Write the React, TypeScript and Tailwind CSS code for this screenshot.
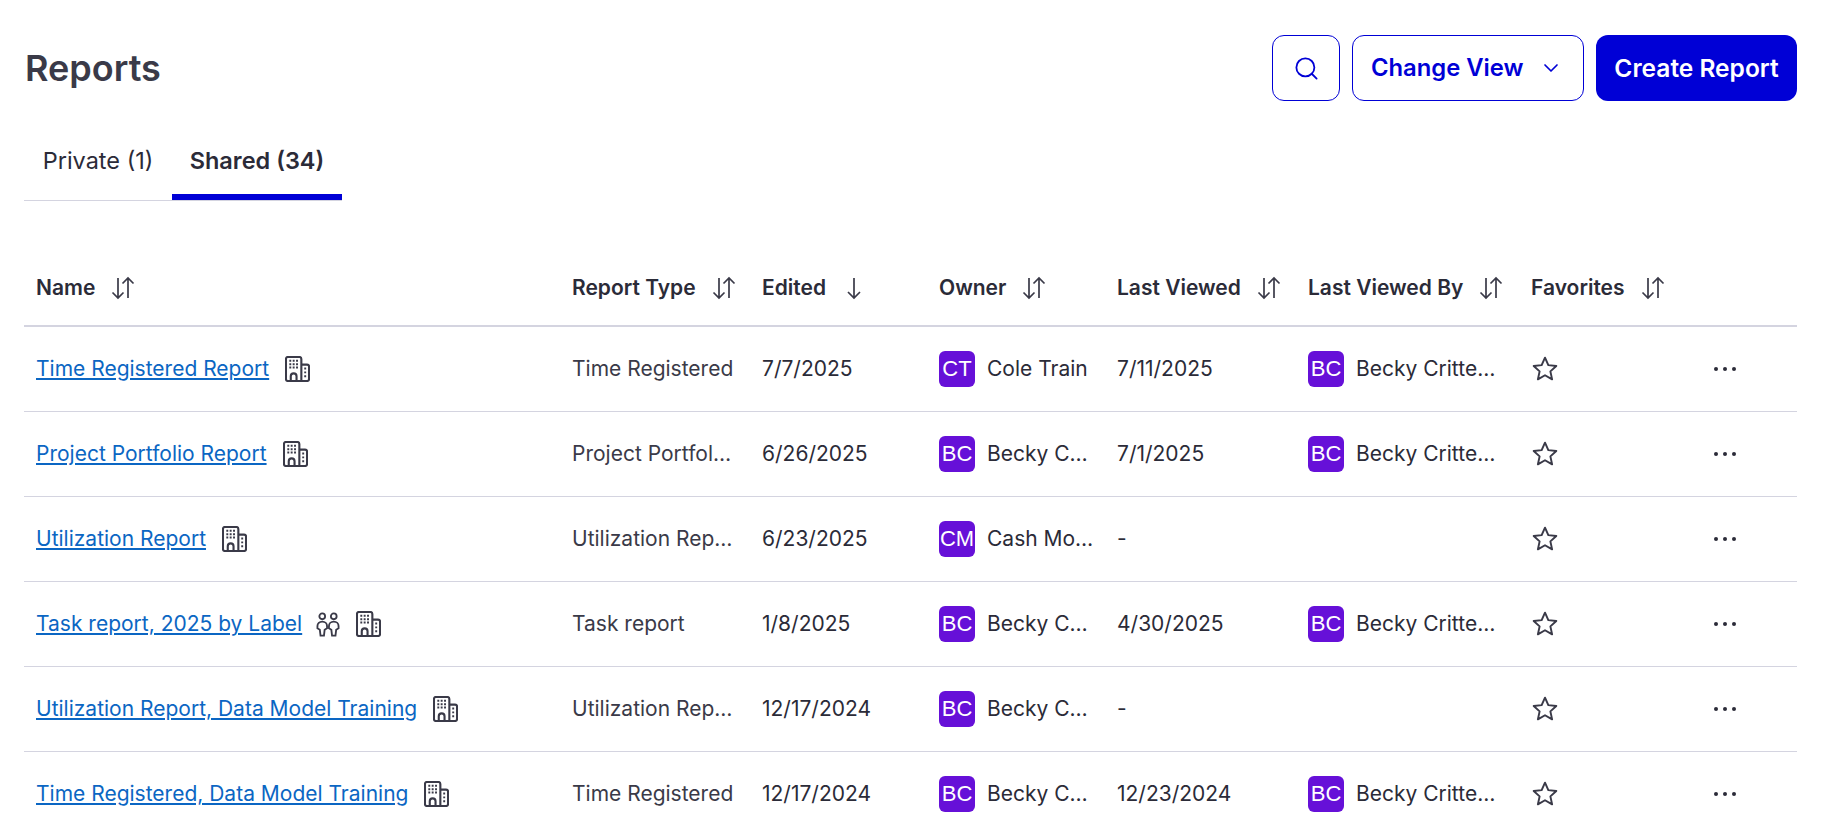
import { ChevronDown, Search } from "lucide-react";

const BLUE = "text-[#0000d6]";
const GRID = "grid grid-cols-[536px_190px_177px_178px_191px_223px_181px_1fr] items-center";

const SortIcon = ({ dir = "both" }: { dir?: "both" | "down" }) => (
  <svg width="26" height="26" viewBox="0 0 26 26" fill="none" stroke="#3a3a48" strokeWidth="1.7" className="ml-[15px]">
    {dir === "both" ? (
      <>
        <path d="M8 3v20M2.500 17.500 8 23l5.500-5.500" />
        <path d="M18 23V3M12.500 8.500 18 3l5.500 5.500" />
      </>
    ) : (
      <path d="M13 3v20M7 17l6 6 6-6" />
    )}
  </svg>
);

const BuildingIcon = () => (
  <svg width="25" height="26" viewBox="0 0 26 27" fill="none" stroke="#3a3a48" strokeWidth="2.200" className="ml-4 shrink-0">
    <path d="M17 26H3a2 2 0 0 1-2-2V3a2 2 0 0 1 2-2h12a2 2 0 0 1 2 2v23Zm0-17h6a2 2 0 0 1 2 2v13a2 2 0 0 1-2 2h-6" />
    <path d="M6 26v-5a3 3 0 0 1 6 0v5" />
    <path
      d="M4.500 5h2M8 5h2M11.500 5h2M4.500 8.500h2M8 8.500h2M11.500 8.500h2M4.500 12h2M8 12h2M11.500 12h2M20 13h2M20 17h2M20 21h2"
      strokeWidth="2"
    />
  </svg>
);

const PeopleIcon = () => (
  <svg width="24" height="25" viewBox="0 0 25 26" fill="none" stroke="#3a3a48" strokeWidth="1.9" className="ml-[14px] shrink-0">
    <circle cx="6.500" cy="4.500" r="3" />
    <circle cx="18.500" cy="4.500" r="3" />
    <path d="M6.500 10c-3 0-5 2-5 4.500V17l2.500 1.500.7 6h3.600l.7-6 2.500-1.500v-2.500c0-2.500-2-4.500-5-4.500Z" />
    <path d="M18.500 10c-3 0-5 2-5 4.500V17l2.500 1.500.7 6h3.600l.7-6 2.500-1.500v-2.500c0-2.500-2-4.500-5-4.500Z" />
  </svg>
);

const StarIcon = () => (
  <svg width="28" height="28" viewBox="0 0 26 26" fill="none" stroke="#3a3a48" strokeWidth="1.8" strokeLinejoin="round">
    <path d="m13 2.500 3.100 6.900 7.400.8-5.500 5 1.600 7.400-6.600-3.800-6.600 3.800 1.600-7.400-5.500-5 7.400-.8L13 2.500Z" />
  </svg>
);

const Avatar = ({ text }: { text: string }) => (
  <span className="flex h-9 w-9 shrink-0 items-center justify-center rounded-md bg-[#6610d8] font-['Liberation_Sans',sans-serif] text-[22px] leading-none text-white">
    {text}
  </span>
);

const Person = ({ initials, name }: { initials: string; name: string }) => (
  <div className="flex items-center gap-3">
    <Avatar text={initials} />
    <span className="whitespace-nowrap">{name}</span>
  </div>
);

const columns = ["Name", "Report Type", "Edited", "Owner", "Last Viewed", "Last Viewed By", "Favorites"];

const rows = [
  { name: "Time Registered Report", type: "Time Registered", edited: "7/7/2025", oi: "CT", owner: "Cole Train", viewed: "7/11/2025", by: true },
  { name: "Project Portfolio Report", type: "Project Portfol…", edited: "6/26/2025", oi: "BC", owner: "Becky C…", viewed: "7/1/2025", by: true },
  { name: "Utilization Report", type: "Utilization Rep…", edited: "6/23/2025", oi: "CM", owner: "Cash Mo…", viewed: "-", by: false },
  { name: "Task report, 2025 by Label", type: "Task report", edited: "1/8/2025", oi: "BC", owner: "Becky C…", viewed: "4/30/2025", by: true, people: true },
  { name: "Utilization Report, Data Model Training", type: "Utilization Rep…", edited: "12/17/2024", oi: "BC", owner: "Becky C…", viewed: "-", by: false },
  { name: "Time Registered, Data Model Training", type: "Time Registered", edited: "12/17/2024", oi: "BC", owner: "Becky C…", viewed: "12/23/2024", by: true },
];

export default function App() {
  return (
    <div className="h-[814px] overflow-hidden bg-white font-['Inter',sans-serif] text-[21px] text-[#2b2b38]">
      <div className="ml-6 mr-[27px]">
        <header className="flex items-center justify-between pt-[35px]">
          <h1 className="pl-px text-[36px] font-semibold text-[#3a3a48]">Reports</h1>
          <div className="flex gap-3">
            <button className={`flex h-[66px] w-[68px] items-center justify-center rounded-xl border border-[#0000d6] ${BLUE}`}>
              <Search size={27} strokeWidth={1.6} />
            </button>
            <button className={`flex h-[66px] w-[232px] items-center justify-between rounded-xl border border-[#0000d6] pl-[18px] pr-[20px] text-[23.800px] font-semibold ${BLUE}`}>
              Change View
              <ChevronDown size={24} strokeWidth={1.7} />
            </button>
            <button className="h-[66px] w-[201px] rounded-xl bg-[#0000d6] text-[24.500px] font-semibold text-white">
              Create Report
            </button>
          </div>
        </header>

        <nav className="mt-[14px] flex h-[86px] w-[318px] border-b border-[#d4d4e0]">
          <div className="flex w-[148px] items-center justify-center pt-[7px] text-[23.500px]">Private (1)</div>
          <div className="flex w-[170px] items-center justify-center border-b-[6px] border-[#0000d6] pt-[13px] text-[23.500px] font-semibold">
            Shared (34)
          </div>
        </nav>

        <div className={`${GRID} mt-[45px] h-[81px] border-b-2 border-[#d4d4e0] pt-[5px] font-semibold`}>
          {columns.map((c) => (
            <div key={c} className="flex items-center px-3">
              <span className="whitespace-nowrap">{c}</span>
              <SortIcon dir={c === "Edited" ? "down" : "both"} />
            </div>
          ))}
        </div>

        {rows.map((r) => (
          <div key={r.name} className={`${GRID} h-[85px] border-b border-[#d4d4e0]`}>
            <div className="flex items-center px-3">
              <a href="#" className="whitespace-nowrap text-[#0b66c3] underline underline-offset-2">
                {r.name}
              </a>
              {r.people && <PeopleIcon />}
              <BuildingIcon />
            </div>
            <div className="whitespace-nowrap px-3 text-[#3a3a48]">{r.type}</div>
            <div className="px-3">{r.edited}</div>
            <div className="px-3">
              <Person initials={r.oi} name={r.owner} />
            </div>
            <div className="px-3">{r.viewed}</div>
            <div className="px-3">{r.by && <Person initials="BC" name="Becky Critte…" />}</div>
            <div className="px-3">
              <StarIcon />
            </div>
            <div className="flex items-center gap-[5px] pl-[14px]">
              <span className="h-[4px] w-[4px] rounded-full bg-[#2b2b38]" />
              <span className="h-[4px] w-[4px] rounded-full bg-[#2b2b38]" />
              <span className="h-[4px] w-[4px] rounded-full bg-[#2b2b38]" />
            </div>
          </div>
        ))}
      </div>
    </div>
  );
}
